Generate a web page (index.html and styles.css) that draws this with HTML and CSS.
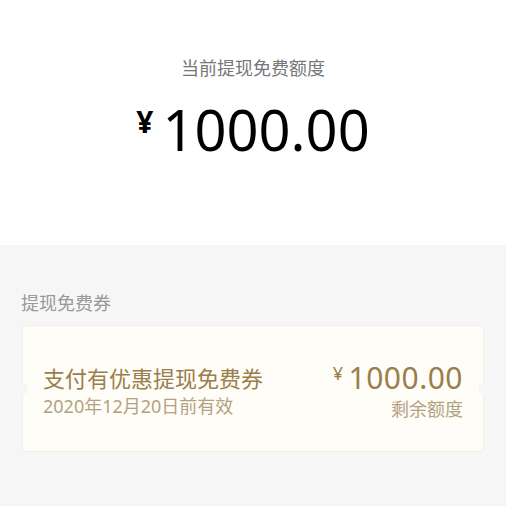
FILE: index.html
```html
<!DOCTYPE html>
<html>

<head>
    <meta charset="UTF-8">
    <meta name="viewport" content="width=device-width, initial-scale=1.0">
    <title>提现免费额度</title>
    <link rel="stylesheet" href="styles.css">
</head>

<body>
    <div class="quota">
        <div class="quota-title">当前提现免费额度</div>
        <div class="quota-amount"><span class="yen">¥</span>1000.00</div>
    </div>
    <div class="coupons">
        <div class="coupons-label">提现免费券</div>
        <div class="coupon">
            <div class="coupon-info">
                <div class="coupon-name">支付有优惠提现免费券</div>
                <div class="coupon-date">2020年12月20日前有效</div>
            </div>
            <div class="coupon-value">
                <div class="coupon-amount"><span class="yen">¥</span>1000.00</div>
                <div class="coupon-note">剩余额度</div>
            </div>
        </div>
    </div>
</body>

</html>
```

FILE: styles.css
```css
body {
    margin: 0;
    height: 100vh;
    display: flex;
    flex-direction: column;
    background-color: #f6f6f6;
    font-family: "Noto Sans", "Noto Sans CJK SC", sans-serif;
}

.quota {
    height: 245px;
    background-color: #fff;
    display: flex;
    flex-direction: column;
    align-items: center;
    box-sizing: border-box;
    padding-top: 54px;
}

.quota-title {
    font-size: 18px;
    line-height: 28px;
    color: #777;
}

.quota-amount {
    margin-top: 12px;
    font-size: 56px;
    line-height: 70px;
    color: #000;
    display: flex;
    align-items: flex-start;
}

.quota-amount .yen {
    font-size: 30px;
    line-height: 56px;
    font-weight: 700;
    margin-right: 9px;
}

.coupons {
    padding: 44px 22px 0 22px;
}

.coupons-label {
    font-size: 18px;
    line-height: 28px;
    color: #999;
    margin-left: -1px;
}

.coupon {
    position: relative;
    margin-top: 8px;
    height: 127px;
    box-sizing: border-box;
    padding: 4px 20px 0 20px;
    background-color: #fffdf7;
    border: 1px solid #f3efe4;
    border-radius: 5px;
    display: flex;
    justify-content: space-between;
    align-items: center;
}

.coupon::before,
.coupon::after {
    content: "";
    position: absolute;
    top: 56px;
    width: 13px;
    height: 13px;
    border-radius: 50%;
    background-color: #f6f6f6;
}

.coupon::before {
    left: -8px;
}

.coupon::after {
    right: -8px;
}

.coupon-name {
    font-size: 22px;
    line-height: 30px;
    color: #9a7e4c;
}

.coupon-date {
    font-size: 18px;
    line-height: 26px;
    color: #b3a282;
}

.coupon-value {
    display: flex;
    flex-direction: column;
    align-items: flex-end;
}

.coupon-amount {
    font-size: 30px;
    line-height: 36px;
    color: #9a7e4c;
    letter-spacing: 0.5px;
    display: flex;
    align-items: flex-start;
}

.coupon-amount .yen {
    font-size: 18px;
    line-height: 26px;
    margin-right: 5px;
}

.coupon-note {
    font-size: 18px;
    line-height: 26px;
    color: #b3a282;
}
```
